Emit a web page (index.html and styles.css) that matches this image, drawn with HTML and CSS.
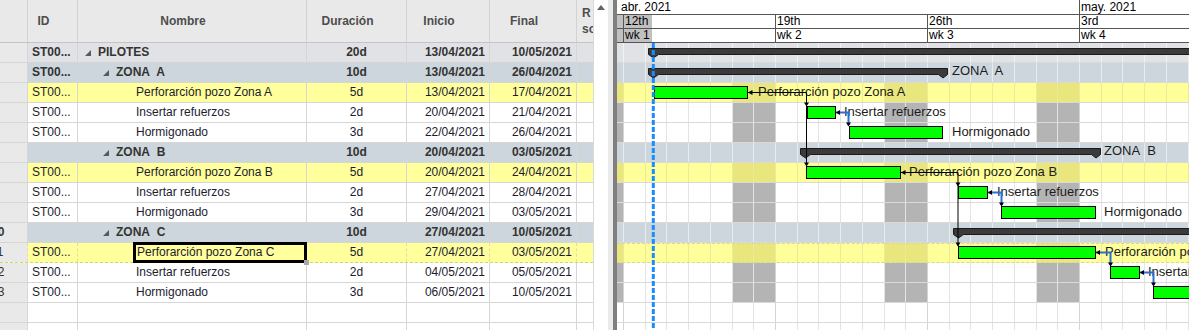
FILE: index.html
```html
<!DOCTYPE html>
<html>
<head>
    <link rel="stylesheet" href="styles.css">
</head>
<body>
<div class="app">
    <div class="grid">
        <div class="grid-head">
            <div class="cell c-num"></div>
            <div class="cell c-id">ID</div>
            <div class="cell c-name">Nombre</div>
            <div class="cell c-dur">Duración</div>
            <div class="cell c-start">Inicio</div>
            <div class="cell c-end">Final</div>
            <div class="cell c-res">R<br>so</div>
        </div>

        <div class="row top">
            <div class="cell c-num">1</div>
            <div class="cell c-id">ST00...</div>
            <div class="cell c-name lvl0"><span class="tog"></span>PILOTES</div>
            <div class="cell c-dur">20d</div>
            <div class="cell c-start">13/04/2021</div>
            <div class="cell c-end">10/05/2021</div>
            <div class="cell c-res"></div>
        </div>
        <div class="row zone">
            <div class="cell c-num">2</div>
            <div class="cell c-id">ST00...</div>
            <div class="cell c-name lvl1"><span class="tog"></span>ZONA&nbsp; A</div>
            <div class="cell c-dur">10d</div>
            <div class="cell c-start">13/04/2021</div>
            <div class="cell c-end">26/04/2021</div>
            <div class="cell c-res"></div>
        </div>
        <div class="row hl">
            <div class="cell c-num">3</div>
            <div class="cell c-id">ST00...</div>
            <div class="cell c-name lvl2">Perforarción pozo Zona A</div>
            <div class="cell c-dur">5d</div>
            <div class="cell c-start">13/04/2021</div>
            <div class="cell c-end">17/04/2021</div>
            <div class="cell c-res"></div>
        </div>
        <div class="row">
            <div class="cell c-num">4</div>
            <div class="cell c-id">ST00...</div>
            <div class="cell c-name lvl2">Insertar refuerzos</div>
            <div class="cell c-dur">2d</div>
            <div class="cell c-start">20/04/2021</div>
            <div class="cell c-end">21/04/2021</div>
            <div class="cell c-res"></div>
        </div>
        <div class="row">
            <div class="cell c-num">5</div>
            <div class="cell c-id">ST00...</div>
            <div class="cell c-name lvl2">Hormigonado</div>
            <div class="cell c-dur">3d</div>
            <div class="cell c-start">22/04/2021</div>
            <div class="cell c-end">26/04/2021</div>
            <div class="cell c-res"></div>
        </div>
        <div class="row zone">
            <div class="cell c-num">6</div>
            <div class="cell c-id"></div>
            <div class="cell c-name lvl1"><span class="tog"></span>ZONA&nbsp; B</div>
            <div class="cell c-dur">10d</div>
            <div class="cell c-start">20/04/2021</div>
            <div class="cell c-end">03/05/2021</div>
            <div class="cell c-res"></div>
        </div>
        <div class="row hl">
            <div class="cell c-num">7</div>
            <div class="cell c-id">ST00...</div>
            <div class="cell c-name lvl2">Perforarción pozo Zona B</div>
            <div class="cell c-dur">5d</div>
            <div class="cell c-start">20/04/2021</div>
            <div class="cell c-end">24/04/2021</div>
            <div class="cell c-res"></div>
        </div>
        <div class="row">
            <div class="cell c-num">8</div>
            <div class="cell c-id">ST00...</div>
            <div class="cell c-name lvl2">Insertar refuerzos</div>
            <div class="cell c-dur">2d</div>
            <div class="cell c-start">27/04/2021</div>
            <div class="cell c-end">28/04/2021</div>
            <div class="cell c-res"></div>
        </div>
        <div class="row">
            <div class="cell c-num">9</div>
            <div class="cell c-id">ST00...</div>
            <div class="cell c-name lvl2">Hormigonado</div>
            <div class="cell c-dur">3d</div>
            <div class="cell c-start">29/04/2021</div>
            <div class="cell c-end">03/05/2021</div>
            <div class="cell c-res"></div>
        </div>
        <div class="row zone">
            <div class="cell c-num">10</div>
            <div class="cell c-id"></div>
            <div class="cell c-name lvl1"><span class="tog"></span>ZONA&nbsp; C</div>
            <div class="cell c-dur">10d</div>
            <div class="cell c-start">27/04/2021</div>
            <div class="cell c-end">10/05/2021</div>
            <div class="cell c-res"></div>
        </div>
        <div class="row hl sel">
            <div class="cell c-num">11</div>
            <div class="cell c-id">ST00...</div>
            <div class="cell c-name editing"><span class="editbox">Perforarción pozo Zona C<span class="handle"></span></span></div>
            <div class="cell c-dur">5d</div>
            <div class="cell c-start">27/04/2021</div>
            <div class="cell c-end">03/05/2021</div>
            <div class="cell c-res"></div>
        </div>
        <div class="row">
            <div class="cell c-num">12</div>
            <div class="cell c-id">ST00...</div>
            <div class="cell c-name lvl2">Insertar refuerzos</div>
            <div class="cell c-dur">2d</div>
            <div class="cell c-start">04/05/2021</div>
            <div class="cell c-end">05/05/2021</div>
            <div class="cell c-res"></div>
        </div>
        <div class="row">
            <div class="cell c-num">13</div>
            <div class="cell c-id">ST00...</div>
            <div class="cell c-name lvl2">Hormigonado</div>
            <div class="cell c-dur">3d</div>
            <div class="cell c-start">06/05/2021</div>
            <div class="cell c-end">10/05/2021</div>
            <div class="cell c-res"></div>
        </div>
        <div class="row">
            <div class="cell c-num"></div>
            <div class="cell c-id"></div>
            <div class="cell c-name"></div>
            <div class="cell c-dur"></div>
            <div class="cell c-start"></div>
            <div class="cell c-end"></div>
            <div class="cell c-res"></div>
        </div>
        <div class="row">
            <div class="cell c-num"></div>
            <div class="cell c-id"></div>
            <div class="cell c-name"></div>
            <div class="cell c-dur"></div>
            <div class="cell c-start"></div>
            <div class="cell c-end"></div>
            <div class="cell c-res"></div>
        </div>
    </div>

    <div class="vscroll"><span class="up"></span></div>
    <div class="split"></div>

    <div class="gantt">
        <div class="g-head">
            <div class="g-hrow months">
                <div class="g-hcell apr">abr. 2021</div>
                <div class="g-hcell may">may. 2021</div>
            </div>
            <div class="g-hrow">
                <div class="g-hcell lead"></div>
                <div class="g-hcell week first">12th</div>
                <div class="g-hcell week">19th</div>
                <div class="g-hcell week">26th</div>
                <div class="g-hcell week">3rd</div>
            </div>
            <div class="g-hrow">
                <div class="g-hcell lead"></div>
                <div class="g-hcell week first">wk 1</div>
                <div class="g-hcell week">wk 2</div>
                <div class="g-hcell week">wk 3</div>
                <div class="g-hcell week">wk 4</div>
            </div>
        </div>

        <div class="g-body">
            <div class="g-row top"></div>
            <div class="g-row zone"></div>
            <div class="g-row hl"></div>
            <div class="g-row task"></div>
            <div class="g-row task"></div>
            <div class="g-row zone"></div>
            <div class="g-row hl"></div>
            <div class="g-row task"></div>
            <div class="g-row task"></div>
            <div class="g-row zone"></div>
            <div class="g-row hl sel"></div>
            <div class="g-row task"></div>
            <div class="g-row task"></div>
            <div class="g-row blank"></div>
            <div class="g-row blank"></div>

            <svg class="chart" width="572" height="287" viewBox="0 0 572 287">
                <!-- summary bars -->
                <g class="sum">
                    <path d="M31.5,5.5 H600 V11.5 H41.5 L36.5,15 L31.5,11.5 Z"/>
                    <path d="M31.5,25.5 H330.5 V31.5 L326,35 L321.5,31.5 H41.5 L36.5,35 L31.5,31.5 Z"/>
                    <path d="M183.5,105.5 H483.5 V111.5 L479,115 L474.5,111.5 H193.5 L188.5,115 L183.5,111.5 Z"/>
                    <path d="M336.5,185.5 H600 V191.5 H346.5 L341.5,195 L336.5,191.5 Z"/>
                </g>
                <!-- task bars -->
                <g class="bar">
                    <rect x="37.5" y="43.5" width="93" height="12"/>
                    <rect x="190.5" y="63.5" width="28" height="12"/>
                    <rect x="232.5" y="83.5" width="93" height="12"/>
                    <rect x="189.5" y="123.5" width="94" height="12"/>
                    <rect x="341.5" y="143.5" width="29" height="12"/>
                    <rect x="384.5" y="163.5" width="94" height="12"/>
                    <rect x="341.5" y="203.5" width="137" height="12"/>
                    <rect x="493.5" y="223.5" width="29" height="12"/>
                    <rect x="536.5" y="243.5" width="100" height="12"/>
                </g>
                <!-- labels -->
                <g class="lbl">
                    <text x="335" y="32">ZONA&#160; A</text>
                    <text x="141" y="53">Perforarción pozo Zona A</text>
                    <text x="227" y="73">Insertar refuerzos</text>
                    <text x="335" y="93">Hormigonado</text>
                    <text x="487" y="112">ZONA&#160; B</text>
                    <text x="292" y="133">Perforarción pozo Zona B</text>
                    <text x="380" y="153">Insertar refuerzos</text>
                    <text x="487" y="173">Hormigonado</text>
                    <text x="488" y="213">Perforarción pozo Zona C</text>
                    <text x="531" y="233">Insertar refuerzos</text>
                </g>
                <!-- dependencies -->
                <g class="link">
                    <polyline points="131,49.5 189.5,49.5 189.5,123"/>
                    <polyline points="284,129.5 341,129.5 341,203"/>
                </g>
                <g class="link blue">
                    <polyline points="219,69.5 231.5,69.5 231.5,82"/>
                    <polyline points="371,149.5 384.5,149.5 384.5,162"/>
                    <polyline points="479,209.5 493.5,209.5 493.5,222"/>
                    <polyline points="523,229.5 536.5,229.5 536.5,242"/>
                </g>
                <g class="arrow">
                    <polygon points="131,49.5 135.5,47 135.5,52"/>
                    <polygon points="284,129.5 288.5,127 288.5,132"/>
                    <polygon points="219,69.5 223,67 223,72"/>
                    <polygon points="371,149.5 375,147 375,152"/>
                    <polygon points="479,209.5 483,207 483,212"/>
                    <polygon points="523,229.5 527,227 527,232"/>
                    <polygon points="187,59.5 192,59.5 189.5,63.5"/>
                    <polygon points="187,119.5 192,119.5 189.5,123.5"/>
                    <polygon points="338.5,139.5 343.5,139.5 341,143.5"/>
                    <polygon points="338.5,199.5 343.5,199.5 341,203.5"/>
                    <polygon points="229,79.5 234,79.5 231.5,83.5"/>
                    <polygon points="382,159.5 387,159.5 384.5,163.5"/>
                    <polygon points="491,219.5 496,219.5 493.5,223.5"/>
                    <polygon points="534,239.5 539,239.5 536.5,243.5"/>
                </g>
                <line class="today" x1="36.3" y1="0" x2="36.3" y2="290"/>
            </svg>
        </div>
    </div>
</div>
</body>
</html>
```

FILE: styles.css
```css
* {
    box-sizing: border-box;
}
body {
    margin: 0;
    font-family: "Liberation Sans", Arial, sans-serif;
    font-size: 12px;
    color: #1c1c30;
    background: #fff;
}
.app {
    display: flex;
    width: 1189px;
    height: 330px;
    overflow: hidden;
}

/* left grid */
.grid {
    width: 593px;
    flex: none;
}
.grid-head {
    display: flex;
    height: 43px;
    background: #e9e9e9;
    border-bottom: 1px solid #c4c4c4;
}
.grid-head .cell {
    display: flex;
    align-items: center;
    justify-content: center;
    padding: 0 18px 0 0;
    font-weight: bold;
    color: #4d4d4d;
    border-right: 1px solid #d2d2d2;
    text-indent: 0;
}
.grid-head .c-res {
    display: block;
    padding: 5px 0 0 5px;
    line-height: 16px;
    text-align: left;
    overflow: hidden;
    border-right: 0;
}
.row {
    display: flex;
    height: 20px;
    line-height: 19px;
    border-bottom: 1px solid #d6d6d6;
    background: #fff;
}
.row .cell {
    flex: none;
    white-space: nowrap;
    overflow: hidden;
    border-right: 1px solid #d6d6d6;
}
.c-num {
    width: 28px;
    background: #e9e9e9;
    text-indent: -9px;
    color: #333;
}
.c-id {
    width: 50px;
    padding-left: 4px;
}
.c-name {
    width: 229px;
}
.c-dur {
    width: 100px;
    text-align: center;
}
.c-start {
    width: 83px;
    text-align: right;
    padding-right: 4px;
}
.c-end {
    width: 87px;
    text-align: right;
    padding-right: 4px;
}
.c-res {
    width: 16px;
}
.row .c-res {
    border-right: 0;
}
.row.top {
    background: #e1e2e6;
}
.row.zone {
    background: #cdd6dc;
}
.row.top,
.row.zone {
    font-weight: bold;
    color: #333;
}
.row.hl {
    background: #ffff9c;
}
.row.sel {
    border-bottom: 1px dashed #cfcf9c;
}
.row.sel .cell {
    border-right-style: dashed;
    border-right-color: #dcdcb0;
}
.row .c-num {
    background: #e9e9e9;
}
.lvl0 {
    display: flex;
    align-items: center;
    padding-left: 7px;
}
.lvl1 {
    display: flex;
    align-items: center;
    padding-left: 25px;
}
.lvl2 {
    padding-left: 58px;
}
.tog {
    width: 0;
    height: 0;
    margin: 1px 7px 0 0;
    border-left: 6px solid transparent;
    border-bottom: 6px solid #5a5a5a;
}
.row .c-name.editing {
    display: flex;
    padding-left: 55px;
    overflow: visible;
}
.editbox {
    position: relative;
    flex: 1;
    margin: -1px -1px -1px 0;
    padding-left: 1px;
    border: 3px solid #000;
    line-height: 15px;
}
.handle {
    position: absolute;
    right: -5px;
    bottom: -5px;
    width: 5px;
    height: 5px;
    background: #a8a8a8;
    z-index: 2;
}

/* scrollbar and splitter */
.vscroll {
    width: 15px;
    flex: none;
    display: flex;
    justify-content: center;
    padding-top: 5px;
    background: #fff;
    border-left: 1px solid #d9d9d9;
}
.up {
    width: 0;
    height: 0;
    border-left: 4px solid transparent;
    border-right: 4px solid transparent;
    border-bottom: 5px solid #636363;
}
.split {
    width: 9px;
    flex: none;
    background: #ebebeb;
    border-right: 4px solid #7f7f7f;
}

/* gantt */
.gantt {
    width: 572px;
    flex: none;
    overflow: hidden;
}
.g-hrow {
    display: flex;
    height: 14px;
    line-height: 13px;
    white-space: nowrap;
    border-bottom: 1px solid #555;
    color: #000;
}
.g-hrow.months {
    height: 15px;
    line-height: 14px;
}
.g-hcell {
    flex: none;
    padding-left: 1px;
    border-left: 1px solid #555;
}
.g-hcell.apr {
    width: 462px;
    padding-left: 4px;
    border-left: 0;
}
.g-hcell.may {
    width: 200px;
}
.g-hcell.lead {
    width: 6px;
    border-left: 0;
    background: #c0c0c0;
}
.g-hcell.week {
    width: 152px;
}
.g-hcell.first {
    background: linear-gradient(90deg, #c0c0c0 0 28px, #fff 28px);
}
.g-body {
    position: relative;
}
.g-row {
    height: 20px;
    border-bottom: 1px solid #dadada;
    background-color: #fff;
    background-image:
        repeating-linear-gradient(90deg, transparent 0 6px, #d4d4d4 6px 7px, transparent 7px 152px),
        repeating-linear-gradient(90deg, transparent 0 6px, #e4e4e4 6px 7px, transparent 7px 21.714px);
}
.g-row.top,
.g-row.zone {
    background-image:
        repeating-linear-gradient(90deg, transparent 0 6px, rgba(255, 255, 255, 0.55) 6px 7px, transparent 7px 21.714px);
}
.g-row.top {
    background-color: #e1e2e6;
}
.g-row.zone {
    background-color: #cdd6dc;
}
.g-row.task {
    background-image:
        repeating-linear-gradient(90deg, transparent 0 6px, #d4d4d4 6px 7px, transparent 7px 152px),
        repeating-linear-gradient(90deg, transparent 0 6px, #e4e4e4 6px 7px, transparent 7px 21.714px),
        repeating-linear-gradient(90deg, #b4b4b4 0 6px, transparent 6px 114.57px, #b4b4b4 114.57px 152px);
}
.g-row.hl {
    background-color: #ffff9a;
    background-image:
        repeating-linear-gradient(90deg, transparent 0 6px, #eaea9a 6px 7px, transparent 7px 21.714px),
        repeating-linear-gradient(90deg, #e8e67c 0 6px, transparent 6px 114.57px, #e8e67c 114.57px 152px);
}
.g-row.sel {
    border-top: 1px dashed #d6d6a0;
    border-bottom: 1px dashed #d6d6a0;
}
.chart {
    position: absolute;
    left: 0;
    top: 0;
}
.sum path {
    fill: #3b3b3b;
    stroke: #1a1a1a;
    stroke-width: 1;
}
.bar rect {
    fill: #00ff00;
    stroke: #000;
    stroke-width: 1;
}
.lbl text {
    font-family: "Liberation Sans", Arial, sans-serif;
    font-size: 13px;
    fill: #1c1c1c;
}
.link polyline {
    fill: none;
    stroke: #000;
    stroke-width: 1;
}
.link.blue polyline {
    stroke: #2b6ed4;
    stroke-width: 2;
}
.arrow polygon {
    fill: #000;
}
.today {
    stroke: #1a8cff;
    stroke-width: 3;
    stroke-dasharray: 5 2;
}
```
